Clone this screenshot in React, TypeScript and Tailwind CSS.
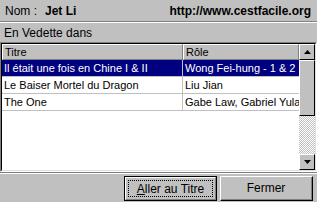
import React from "react";

const rows = [
  ["Il était une fois en Chine I & II", "Wong Fei-hung - 1 & 2"],
  ["Le Baiser Mortel du Dragon", "Liu Jian"],
  ["The One", "Gabe Law, Gabriel Yula"],
];

function Arrow({ up }: { up: boolean }) {
  return (
    <svg width="7" height="4" viewBox="0 0 7 4">
      {up ? <polygon points="3.5,0 7,4 0,4" fill="#000" /> : <polygon points="0,0 7,0 3.5,4" fill="#000" />}
    </svg>
  );
}

export default function App() {
  return (
    <div
      className="w-[317px] h-[202px] bg-[#c0c0c0] flex flex-col overflow-hidden text-[11px] text-black"
      style={{ fontFamily: '"Liberation Sans", Arial, sans-serif' }}
    >
      <div className="h-[21px] flex items-center pl-[5px] pr-[6px]">
        <span className="text-[12px]">Nom :</span>
        <span className="font-bold ml-[8px] text-[12px]">Jet Li</span>
        <span className="font-bold ml-auto text-[12px]">http://www.cestfacile.org</span>
      </div>
      <div className="h-[2px] border-t border-t-[#808080] border-b border-b-white" />
      <div className="h-[19px] flex items-center pl-[4px] text-[12px]">En Vedette dans</div>
      <div className="h-[130px] border-t border-l border-t-[#808080] border-l-[#808080] border-b border-r border-b-white border-r-white flex">
        <div className="flex-1 min-w-0 flex border-t border-l border-t-black border-l-black border-b border-r border-b-[#dfdfdf] border-r-[#dfdfdf] bg-white">
          <div className="flex-1 min-w-0 flex flex-col overflow-hidden">
            <div className="h-[16px] flex bg-[#c0c0c0] shrink-0">
              <div className="w-[181px] shrink-0 border-t border-l border-t-white border-l-white border-r border-b border-r-[#808080] border-b-[#808080] pl-[2px] leading-[14px]">
                Titre
              </div>
              <div className="flex-1 min-w-0 border-t border-l border-t-white border-l-white border-r border-b border-r-[#808080] border-b-[#808080] pl-[2px] leading-[14px]">
                Rôle
              </div>
            </div>
            {rows.map((r, i) => (
              <div
                key={i}
                className={
                  "h-[17px] flex shrink-0 whitespace-nowrap border-b border-b-[#c0c0c0] " +
                  (i === 0 ? "bg-[#000080] text-white" : "")
                }
              >
                <div className="w-[181px] shrink-0 pl-[2px] leading-[16px] overflow-hidden border-r border-r-[#c0c0c0]">
                  {r[0]}
                </div>
                <div className="flex-1 min-w-0 pl-[2px] leading-[16px] overflow-hidden">{r[1]}</div>
              </div>
            ))}
          </div>
          <div className="w-[16px] flex flex-col shrink-0">
            <div className="h-[16px] bg-[#c0c0c0] border-t border-l border-t-white border-l-white border-r border-b border-r-black border-b-black flex items-center justify-center shrink-0">
              <Arrow up />
            </div>
            <div className="h-[56px] bg-[#c0c0c0] border-t border-l border-t-white border-l-white border-r border-b border-r-black border-b-black shrink-0" />
            <div className="flex-1 bg-[repeating-conic-gradient(#ffffff_0_25%,#c0c0c0_0_50%)] bg-[length:2px_2px]" />
            <div className="h-[16px] bg-[#c0c0c0] border-t border-l border-t-white border-l-white border-r border-b border-r-black border-b-black flex items-center justify-center shrink-0">
              <Arrow up={false} />
            </div>
          </div>
        </div>
      </div>
      <div className="h-[2px] border-t border-t-[#808080] border-b border-b-white" />
      <div className="flex-1 flex items-center justify-end gap-[3px] pr-[4px] pt-[1px] text-[12px]">
        <div className="w-[93px] h-[25px] border border-black flex">
          <div className="flex-1 border-t border-l border-t-white border-l-white border-r border-b border-r-[#808080] border-b-[#808080] flex p-[2px]">
            <div className="flex-1 border border-dotted border-black flex items-center justify-center">
              <span>
                <span className="underline">A</span>ller au Titre
              </span>
            </div>
          </div>
        </div>
        <div className="w-[93px] h-[25px] border-t border-l border-t-white border-l-white border-r border-b border-r-black border-b-black flex">
          <div className="flex-1 border-r border-b border-r-[#808080] border-b-[#808080] flex items-center justify-center">
            Fermer
          </div>
        </div>
      </div>
    </div>
  );
}
